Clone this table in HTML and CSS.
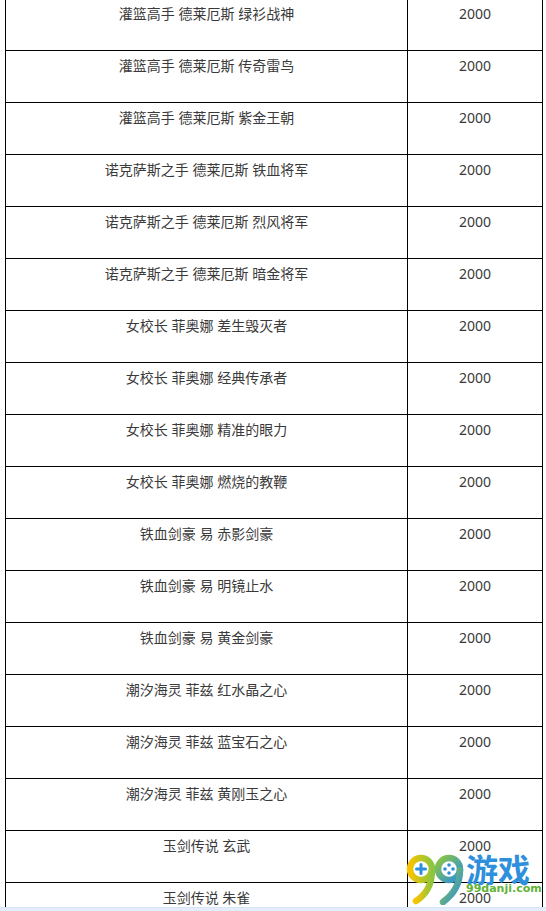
FILE: index.html
```html
<!DOCTYPE html>
<html lang="zh-CN">
<head>
<meta charset="utf-8">
<title>皮肤列表</title>
<link rel="stylesheet" href="styles.css">
</head>
<body>
<div class="page">
<table class="skins">
<tbody>
<tr><td class="name">灌篮高手 德莱厄斯 绿衫战神</td><td class="price">2000</td></tr>
<tr><td class="name">灌篮高手 德莱厄斯 传奇雷鸟</td><td class="price">2000</td></tr>
<tr><td class="name">灌篮高手 德莱厄斯 紫金王朝</td><td class="price">2000</td></tr>
<tr><td class="name">诺克萨斯之手 德莱厄斯 铁血将军</td><td class="price">2000</td></tr>
<tr><td class="name">诺克萨斯之手 德莱厄斯 烈风将军</td><td class="price">2000</td></tr>
<tr><td class="name">诺克萨斯之手 德莱厄斯 暗金将军</td><td class="price">2000</td></tr>
<tr><td class="name">女校长 菲奥娜 差生毁灭者</td><td class="price">2000</td></tr>
<tr><td class="name">女校长 菲奥娜 经典传承者</td><td class="price">2000</td></tr>
<tr><td class="name">女校长 菲奥娜 精准的眼力</td><td class="price">2000</td></tr>
<tr><td class="name">女校长 菲奥娜 燃烧的教鞭</td><td class="price">2000</td></tr>
<tr><td class="name">铁血剑豪 易 赤影剑豪</td><td class="price">2000</td></tr>
<tr><td class="name">铁血剑豪 易 明镜止水</td><td class="price">2000</td></tr>
<tr><td class="name">铁血剑豪 易 黄金剑豪</td><td class="price">2000</td></tr>
<tr><td class="name">潮汐海灵 菲兹 红水晶之心</td><td class="price">2000</td></tr>
<tr><td class="name">潮汐海灵 菲兹 蓝宝石之心</td><td class="price">2000</td></tr>
<tr><td class="name">潮汐海灵 菲兹 黄刚玉之心</td><td class="price">2000</td></tr>
<tr><td class="name">玉剑传说 玄武</td><td class="price">2000</td></tr>
<tr><td class="name">玉剑传说 朱雀</td><td class="price">2000</td></tr>
</tbody>
</table>
</div>
<div class="bottom-strip"></div>
<div class="watermark">
  <svg class="wm-mark" width="62" height="54" viewBox="0 0 62 54">
    <defs>
      <linearGradient id="g1" x1="0" y1="0" x2="1" y2="0">
        <stop offset="0" stop-color="#f7c400"/>
        <stop offset="1" stop-color="#8cc63f"/>
      </linearGradient>
      <linearGradient id="g2" x1="0" y1="0" x2="1" y2="1">
        <stop offset="0" stop-color="#8cc63f"/>
        <stop offset="1" stop-color="#2b8fe0"/>
      </linearGradient>
    </defs>
    <circle cx="15" cy="18" r="11" fill="none" stroke="url(#g1)" stroke-width="6.5"/>
    <path d="M26 19 C26 32 21 43 10 50" fill="none" stroke="url(#g1)" stroke-width="6.5" stroke-linecap="round"/>
    <path d="M15 13.5 V22.5 M10.5 18 H19.5" stroke="#2b8fe0" stroke-width="3" stroke-linecap="round"/>
    <circle cx="43" cy="18" r="11" fill="none" stroke="url(#g2)" stroke-width="6.5"/>
    <path d="M54 19 C54 32 48 43 37 51" fill="none" stroke="url(#g2)" stroke-width="6.5" stroke-linecap="round"/>
    <circle cx="43" cy="14" r="1.8" fill="#2b8fe0"/>
    <circle cx="43" cy="22" r="1.8" fill="#2b8fe0"/>
    <circle cx="39" cy="18" r="1.8" fill="#2b8fe0"/>
    <circle cx="47" cy="18" r="1.8" fill="#2b8fe0"/>
  </svg>
  <div class="wm-text">
    <span class="wm-title">游戏</span>
    <span class="wm-url">99danji.com</span>
  </div>
</div>
</body>
</html>
```

FILE: styles.css
```css
html, body {
  margin: 0;
  padding: 0;
  background: #ffffff;
}

body {
  font-family: "Noto Sans", "Noto Sans CJK SC", sans-serif;
  color: #3a3a3a;
  width: 546px;
  height: 911px;
  overflow: hidden;
  position: relative;
}

.page {
  padding-left: 5px;
  margin-top: -2px;
}

.skins {
  border-collapse: collapse;
  width: 537px;
  table-layout: fixed;
}

.skins td {
  border: 1px solid #000000;
  height: 52px;
  padding: 5px 0 0 0;
  box-sizing: border-box;
  vertical-align: top;
  text-align: center;
  font-size: 14px;
  line-height: 20px;
}

.skins td.name {
  width: 402px;
}

.skins td.price {
  width: 135px;
}

.bottom-strip {
  position: absolute;
  left: 0;
  right: 0;
  top: 907px;
  height: 4px;
  background: #e3eefa;
  border-top: 1px solid #d6e4f4;
}

.watermark {
  position: absolute;
  left: 406px;
  top: 851px;
  display: flex;
  align-items: flex-start;
}

.wm-mark {
  display: block;
}

.wm-text {
  display: flex;
  flex-direction: column;
  margin-left: -2px;
}

.wm-title {
  font-family: "Noto Sans CJK SC", sans-serif;
  font-weight: 700;
  font-size: 32px;
  line-height: 34px;
  color: #2e8fdc;
  letter-spacing: 0;
}

.wm-url {
  font-family: "DejaVu Sans", sans-serif;
  font-weight: 700;
  font-size: 11px;
  line-height: 12px;
  color: #5fb336;
  margin-top: -2px;
}
```
